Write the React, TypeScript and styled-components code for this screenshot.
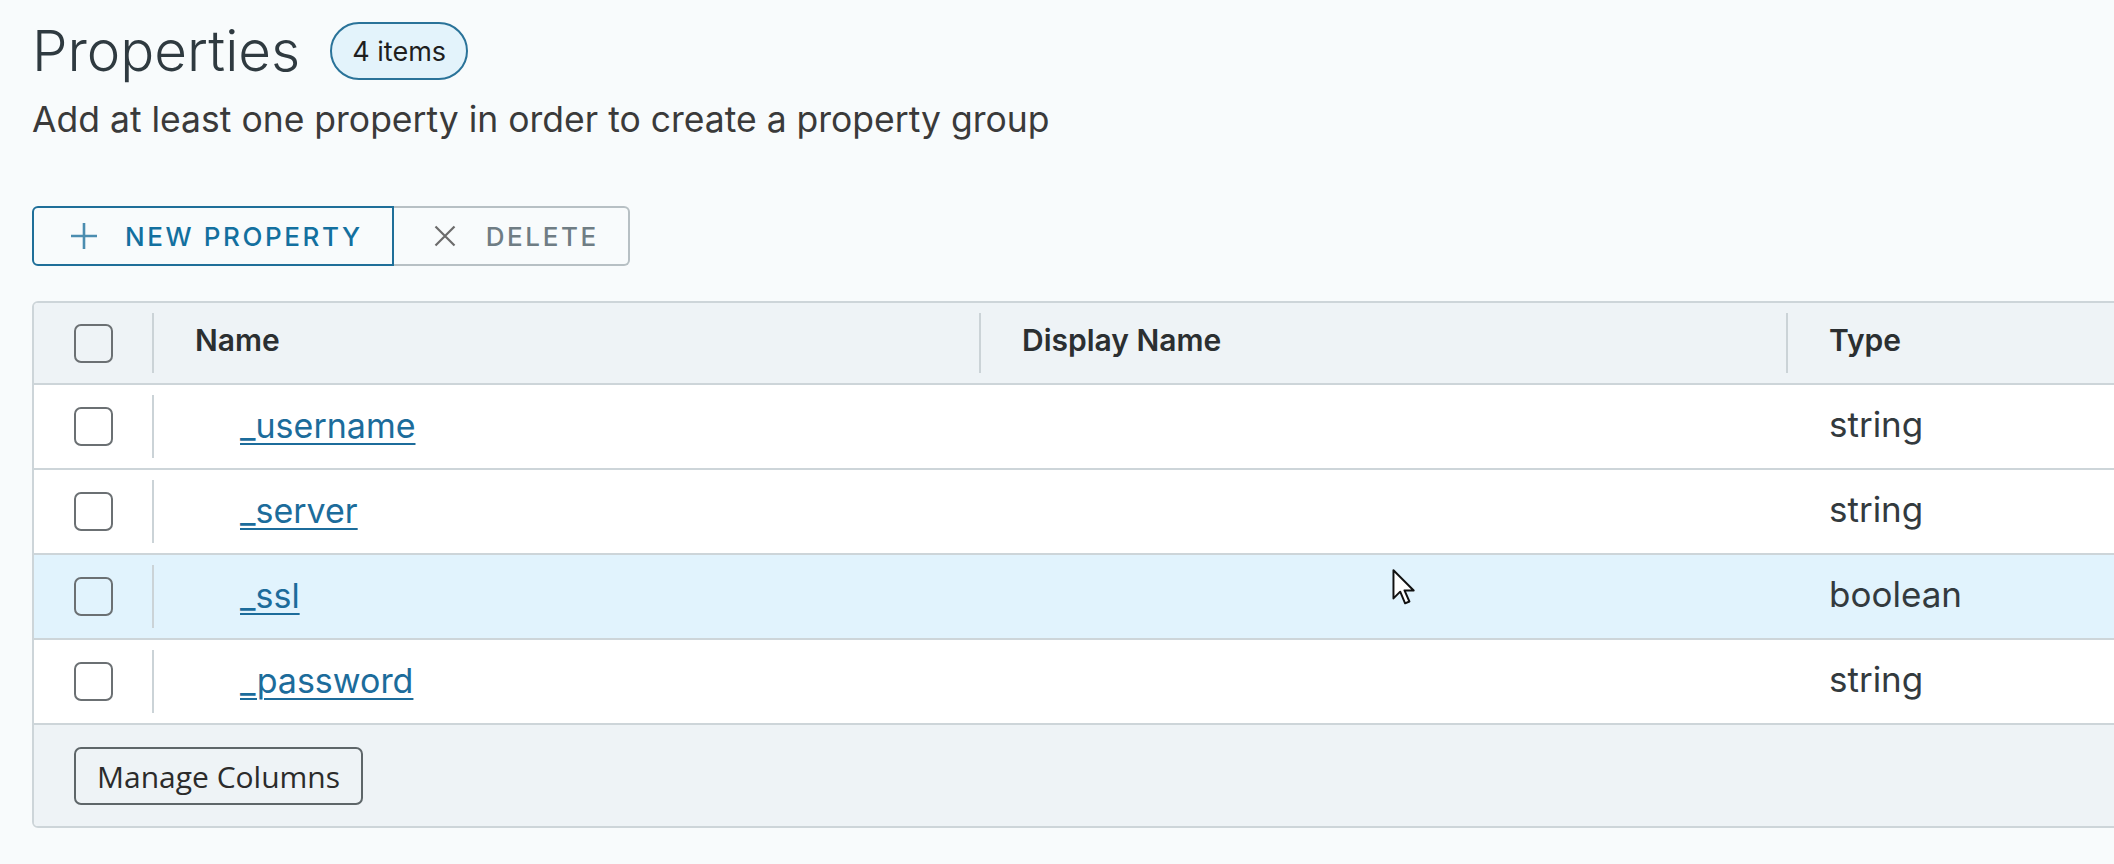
import React from 'react';
import styled, { createGlobalStyle } from 'styled-components';

const GlobalStyle = createGlobalStyle`
  html, body { margin: 0; padding: 0; background: #f8fbfc; overflow: hidden; }
  body { font-family: Inter, "Open Sans", sans-serif; color: #313131; }
  * { box-sizing: border-box; }
`;

const Page = styled.div`
  position: relative;
  width: 2114px;
  height: 864px;
  padding: 22px 0 0 32px;
  overflow: hidden;
`;

const TitleRow = styled.div`
  display: flex;
  align-items: center;
  gap: 30px;
  height: 58px;
`;

const Title = styled.h1`
  margin: 0;
  font: 300 56.5px/58px Inter, sans-serif;
  color: #2f3a40;
`;

const Badge = styled.span`
  display: inline-flex;
  align-items: center;
  justify-content: center;
  height: 58px;
  padding: 0 20px;
  border: 2px solid #2a7399;
  border-radius: 29px;
  background: #e3f3fb;
  font: 400 27px Inter, sans-serif;
  color: #1f1f1f;
`;

const Subtitle = styled.p`
  margin: 20px 0 0;
  font: 400 35.5px/40px Inter, sans-serif;
  color: #3a3a3a;
`;

const Toolbar = styled.div`
  display: flex;
  margin-top: 66px;
  height: 60px;
`;

const ToolButton = styled.button<{ $primary?: boolean }>`
  display: flex;
  align-items: center;
  height: 60px;
  margin: 0;
  background: transparent;
  font: 500 26px Inter, sans-serif;
  letter-spacing: 0.1em;
  text-transform: uppercase;
  cursor: pointer;
  ${(p) =>
    p.$primary
      ? `
    border: 2px solid #1f6f99;
    border-radius: 6px 0 0 6px;
    color: #13709f;
    padding: 0 29px 0 36px;
    gap: 27px;
  `
      : `
    border: 2px solid #b7c0c4;
    border-left: none;
    border-radius: 0 6px 6px 0;
    color: #6f7d84;
    padding: 0 29px 0 40px;
    gap: 30px;
  `}
`;

const Table = styled.div`
  margin-top: 35px;
  width: 2300px;
  border: 2px solid #cdd5d9;
  border-radius: 6px;
  overflow: hidden;
  background: #fff;
`;

const Row = styled.div<{ $head?: boolean; $highlight?: boolean }>`
  display: grid;
  grid-template-columns: 118px 2px 825px 2px 805px 2px 1fr;
  align-items: center;
  height: ${(p) => (p.$head ? '82px' : '85px')};
  border-bottom: 2px solid #cdd5d9;
  background: ${(p) => (p.$head ? '#eef3f6' : p.$highlight ? '#e1f3fd' : '#ffffff')};
`;

const CheckCell = styled.div`
  display: flex;
  justify-content: center;
  align-items: center;
`;

const Checkbox = styled.span`
  display: block;
  width: 39px;
  height: 39px;
  border: 2px solid #6b7073;
  border-radius: 7px;
  background: transparent;
`;

const Divider = styled.span<{ $hidden?: boolean }>`
  align-self: stretch;
  margin: 10px 0;
  background: ${(p) => (p.$hidden ? 'transparent' : '#cbd3d7')};
`;

const HeadCell = styled.div`
  padding: 0 0 6px 41px;
  font: 600 30px Inter, sans-serif;
  color: #2b2f31;
`;

const NameCell = styled.div`
  padding: 0 0 3px 86px;
`;

const NameLink = styled.a`
  font: 400 34px Inter, sans-serif;
  color: #1c6c9b;
  text-decoration: underline;
  text-decoration-thickness: 2px;
  text-underline-offset: 5px;
  cursor: pointer;
`;

const TypeCell = styled.div`
  padding: 0 0 6px 41px;
  font: 400 35px Inter, sans-serif;
  color: #333a3e;
`;

const Footer = styled.div`
  height: 101px;
  padding: 22px 0 0 40px;
  background: #eef3f6;
`;

const ManageButton = styled.button`
  height: 58px;
  padding: 0 21px;
  border: 2px solid #5e6669;
  border-radius: 7px;
  background: transparent;
  font: 400 30px "Open Sans", sans-serif;
  color: #2b2b2b;
  cursor: pointer;
`;

const Cursor = styled.svg`
  position: absolute;
  left: 1392px;
  top: 569px;
`;

const PlusIcon = () => (
  <svg width="28" height="28" viewBox="0 0 28 28">
    <path d="M14 1v26M1 14h26" stroke="#4b8db0" strokeWidth="2.6" fill="none" />
  </svg>
);

const CloseIcon = () => (
  <svg width="22" height="22" viewBox="0 0 22 22">
    <path d="M1.5 1.5l19 19M20.5 1.5l-19 19" stroke="#6b6b6b" strokeWidth="2.2" fill="none" />
  </svg>
);

const rows = [
  { name: '_username', type: 'string' },
  { name: '_server', type: 'string' },
  { name: '_ssl', type: 'boolean', highlight: true },
  { name: '_password', type: 'string' },
];

export default function App() {
  return (
    <>
      <GlobalStyle />
      <Page>
        <TitleRow>
          <Title>Properties</Title>
          <Badge>4 items</Badge>
        </TitleRow>
        <Subtitle>Add at least one property in order to create a property group</Subtitle>
        <Toolbar>
          <ToolButton $primary>
            <PlusIcon />
            New Property
          </ToolButton>
          <ToolButton>
            <CloseIcon />
            Delete
          </ToolButton>
        </Toolbar>
        <Table>
          <Row $head>
            <CheckCell>
              <Checkbox />
            </CheckCell>
            <Divider />
            <HeadCell>Name</HeadCell>
            <Divider />
            <HeadCell>Display Name</HeadCell>
            <Divider />
            <HeadCell>Type</HeadCell>
          </Row>
          {rows.map((r) => (
            <Row key={r.name} $highlight={r.highlight}>
              <CheckCell>
                <Checkbox />
              </CheckCell>
              <Divider />
              <NameCell>
                <NameLink>{r.name}</NameLink>
              </NameCell>
              <Divider $hidden />
              <div />
              <Divider $hidden />
              <TypeCell>{r.type}</TypeCell>
            </Row>
          ))}
          <Footer>
            <ManageButton>Manage Columns</ManageButton>
          </Footer>
        </Table>
        <Cursor width="25" height="38" viewBox="0 0 20 31">
          <path
            d="M1 1 L1 24 L6.5 18.5 L10.5 28 L14 26.5 L10 17.5 L17.5 17.5 Z"
            fill="#ffffff"
            stroke="#111111"
            strokeWidth="1.6"
            strokeLinejoin="round"
          />
        </Cursor>
      </Page>
    </>
  );
}
